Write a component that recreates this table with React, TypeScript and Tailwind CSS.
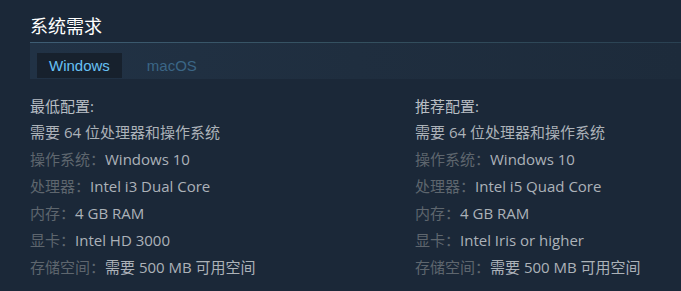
import React from 'react';

const font = { fontFamily: '"Open Sans", "Noto Sans CJK SC", sans-serif' };

type Row = { label?: string; value: string };

const minimum: Row[] = [
    { value: '需要 64 位处理器和操作系统' },
    { label: '操作系统：', value: 'Windows 10' },
    { label: '处理器：', value: 'Intel i3 Dual Core' },
    { label: '内存：', value: '4 GB RAM' },
    { label: '显卡：', value: 'Intel HD 3000' },
    { label: '存储空间：', value: '需要 500 MB 可用空间' },
];

const recommended: Row[] = [
    { value: '需要 64 位处理器和操作系统' },
    { label: '操作系统：', value: 'Windows 10' },
    { label: '处理器：', value: 'Intel i5 Quad Core' },
    { label: '内存：', value: '4 GB RAM' },
    { label: '显卡：', value: 'Intel Iris or higher' },
    { label: '存储空间：', value: '需要 500 MB 可用空间' },
];

function ReqColumn({ title, rows }: { title: string; rows: Row[] }) {
    return (
        <div className="text-[15px]" style={font}>
            <div className="leading-[25px] text-[#b8bec4] whitespace-nowrap">{title}</div>
            {rows.map((r, i) => (
                <div key={i} className="leading-[27px] whitespace-nowrap">
                    {r.label && <span className="text-[#5e666e]">{r.label}</span>}
                    <span className="text-[#acb2b8]">{r.value}</span>
                </div>
            ))}
        </div>
    );
}

export default function App() {
    return (
        <div className="w-[681px] h-[291px] overflow-hidden bg-[#1b2838] pl-[30px] pt-[14px]">
            <h2 className="text-[18px] leading-[24px] text-white" style={font}>系统需求</h2>
            <div className="mt-[4px] h-px bg-gradient-to-r from-[#3e5d74] via-[#34505f] to-[#2a4152]" />
            <div className="h-[36px] bg-gradient-to-r from-[#213245] via-[#1f2e3f] to-[#1d2b3b] flex items-end gap-[13px] pl-[7px] pb-px">
                <div
                    className="h-[25px] px-[12px] bg-[#17212d] text-[#67c1f5] text-[15px] leading-[25px]"
                    style={{ fontFamily: '"Liberation Sans", Arial, sans-serif' }}
                >
                    Windows
                </div>
                <div
                    className="h-[25px] px-[12px] text-[#3b6686] text-[15px] leading-[25px]"
                    style={{ fontFamily: '"Liberation Sans", Arial, sans-serif' }}
                >
                    macOS
                </div>
            </div>
            <div className="mt-[15px] grid grid-cols-[385px_1fr]">
                <ReqColumn title="最低配置:" rows={minimum} />
                <ReqColumn title="推荐配置:" rows={recommended} />
            </div>
        </div>
    );
}
